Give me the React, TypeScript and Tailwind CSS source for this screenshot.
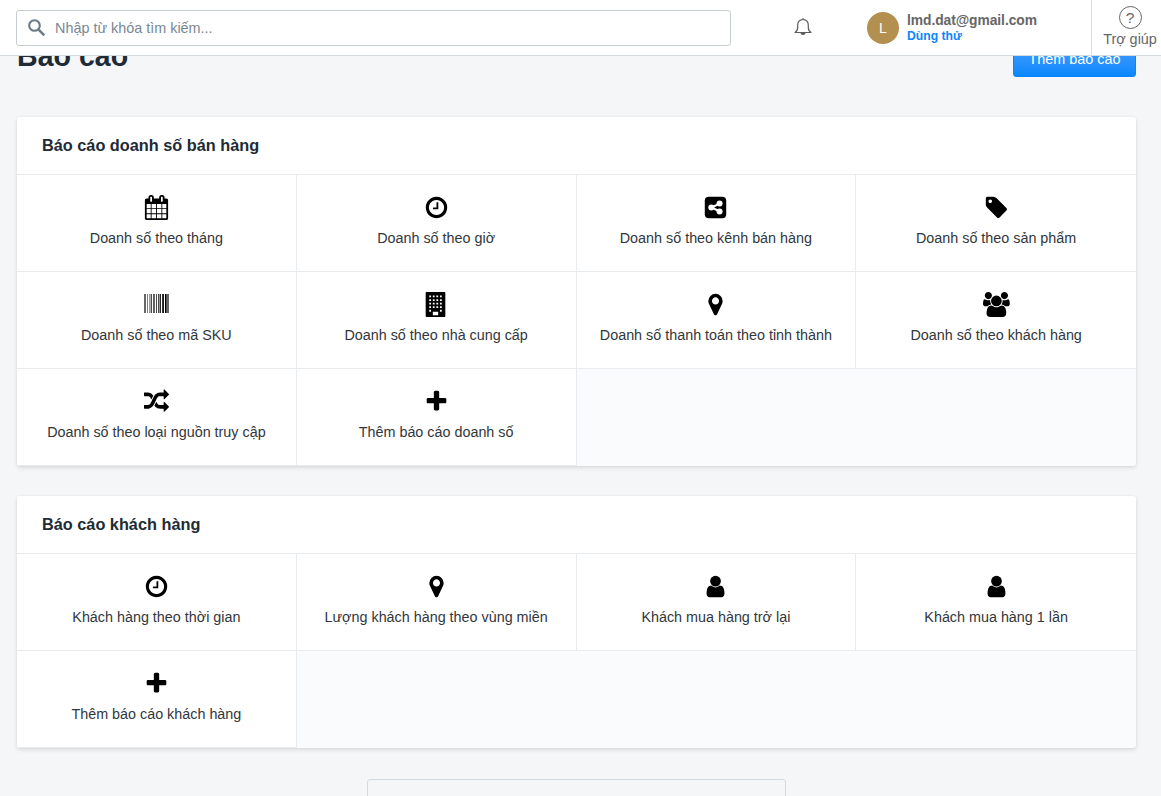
import React from "react";

type IconName =
  | "calendar" | "clock" | "share" | "tag" | "barcode" | "building"
  | "marker" | "users" | "random" | "plus" | "user";

const paths: Record<Exclude<IconName, "share" | "barcode">, string> = {
  calendar:
    "M192 1664h288v-288h-288v288zm352 0h320v-288h-320v288zm-352-352h288v-320h-288v320zm352 0h320v-320h-320v320zm-352-384h288v-288h-288v288zm736 736h320v-288h-320v288zm-384-736h320v-288h-320v288zm768 736h288v-288h-288v288zm-384-352h320v-320h-320v320zm-352-864v-288q0-13-9.5-22.5t-22.5-9.5h-64q-13 0-22.5 9.5t-9.5 22.5v288q0 13 9.5 22.5t22.5 9.5h64q13 0 22.5-9.5t9.5-22.5zm736 864h288v-320h-288v320zm-384-384h320v-288h-320v288zm384 0h288v-288h-288v288zm32-480v-288q0-13-9.5-22.5t-22.5-9.5h-64q-13 0-22.5 9.5t-9.5 22.5v288q0 13 9.5 22.5t22.5 9.5h64q13 0 22.5-9.5t9.5-22.5zm384-64v1280q0 52-38 90t-90 38h-1408q-52 0-90-38t-38-90v-1280q0-52 38-90t90-38h128v-96q0-66 47-113t113-47h64q66 0 113 47t47 113v96h384v-96q0-66 47-113t113-47h64q66 0 113 47t47 113v96h128q52 0 90 38t38 90z",
  clock:
    "M1024 544v448q0 14-9 23t-23 9h-320q-14 0-23-9t-9-23v-64q0-14 9-23t23-9h224v-352q0-14 9-23t23-9h64q14 0 23 9t9 23zm416 352q0-148-73-273t-198-198-273-73-273 73-198 198-73 273 73 273 198 198 273 73 273-73 198-198 73-273zm224 0q0 209-103 385.5t-279.5 279.5-385.5 103-385.5-103-279.5-279.5-103-385.5 103-385.5 279.5-279.5 385.5-103 385.5 103 279.5 279.5 103 385.5z",
  tag:
    "M576 448q0-53-37.5-90.5t-90.5-37.5-90.5 37.5-37.5 90.5 37.5 90.5 90.5 37.5 90.5-37.5 37.5-90.5zm1067 576q0 53-37 90l-491 492q-39 37-91 37-53 0-90-37l-715-716q-38-37-64.5-101t-26.5-117v-416q0-52 38-90t90-38h416q53 0 117 26.5t102 64.5l715 714q37 39 37 91z",
  building:
    "M256 0h1280q26 0 45 19t19 45v1664q0 26-19 45t-45 19h-1280q-26 0-45-19t-19-45v-1664q0-26 19-45t45-19zM448 256v128h128v-128zM704 256v128h128v-128zM960 256v128h128v-128zM1216 256v128h128v-128zM448 512v128h128v-128zM704 512v128h128v-128zM960 512v128h128v-128zM1216 512v128h128v-128zM448 768v128h128v-128zM704 768v128h128v-128zM960 768v128h128v-128zM1216 768v128h128v-128zM448 1024v128h128v-128zM704 1024v128h128v-128zM960 1024v128h128v-128zM1216 1024v128h128v-128zM448 1280v128h128v-128zM1216 1280v128h128v-128zM704 1408v256h384v-256z",
  marker:
    "M1152 640q0-106-75-181t-181-75-181 75-75 181 75 181 181 75 181-75 75-181zm256 0q0 109-33 179l-364 774q-16 33-47.5 52t-67.5 19-67.5-19-46.5-52l-365-774q-33-70-33-179 0-212 150-362t362-150 362 150 150 362z",
  users:
    "M593 896q-162 5-265 128h-134q-82 0-138-40.5t-56-118.5q0-353 124-353 6 0 43.5 21t97.5 42.5 119 21.5q67 0 133-23-5 37-5 66 0 139 81 256zm1071 637q0 120-73 189.5t-194 69.5h-874q-121 0-194-69.5t-73-189.5q0-53 3.5-103.5t14-109 26.5-108.5 43-97.5 62-81 85.5-53.5 111.5-20q10 0 43 21.5t73 48 107 48 135 21.5 135-21.5 107-48 73-48 43-21.5q61 0 111.5 20t85.5 53.5 62 81 43 97.5 26.5 108.5 14 109 3.5 103.5zm-1024-1277q0 106-75 181t-181 75-181-75-75-181 75-181 181-75 181 75 75 181zm704 384q0 159-112.5 271.5t-271.5 112.5-271.5-112.5-112.5-271.5 112.5-271.5 271.5-112.5 271.5 112.5 112.5 271.5zm576 225q0 78-56 118.5t-138 40.5h-134q-103-123-265-128 81-117 81-256 0-29-5-66 66 23 133 23 59 0 119-21.5t97.5-42.5 43.5-21q124 0 124 353zm-128-609q0 106-75 181t-181 75-181-75-75-181 75-181 181-75 181 75 75 181z",
  random:
    "M666 481q-60 92-137 273-22-45-37-72.5t-40.5-63.5-51-56.5-63-35-81.5-14.5h-224q-14 0-23-9t-9-23v-192q0-14 9-23t23-9h224q250 0 410 225zm1126 799q0 14-9 23l-320 320q-9 9-23 9-13 0-22.5-9.5t-9.5-22.5v-192q-32 0-85 .5t-81 1-73-1-71-5-64-10.5-63-18.5-58-28.5-59-40-55-53.5-56-69.5q59-93 136-273 22 45 37 72.5t40.5 63.5 51 56.5 63 35 81.5 14.5h256v-192q0-14 9-23t23-9q12 0 24 10l319 319q9 9 9 23zm0-896q0 14-9 23l-320 320q-9 9-23 9-13 0-22.5-9.5t-9.5-22.5v-192h-256q-48 0-87 15t-69 45-51 61.5-45 77.5q-32 62-78 171-29 66-49.5 111t-54 105-64 100-74 83-90 68.5-106.5 42-128 16.5h-224q-14 0-23-9t-9-23v-192q0-14 9-23t23-9h224q48 0 87-15t69-45 51-61.5 45-77.5q32-62 78-171 29-66 49.5-111t54-105 64-100 74-83 90-68.5 106.5-42 128-16.5h256v-192q0-14 9-23t23-9q12 0 24 10l319 319q9 9 9 23z",
  plus:
    "M1600 736v192q0 40-28 68t-68 28h-416v416q0 40-28 68t-68 28h-192q-40 0-68-28t-28-68v-416h-416q-40 0-68-28t-28-68v-192q0-40 28-68t68-28h416v-416q0-40 28-68t68-28h192q40 0 68 28t28 68v416h416q40 0 68 28t28 68z",
  user:
    "M1536 1399q0 109-62.5 187t-150.5 78h-854q-88 0-150.5-78t-62.5-187q0-85 8.5-160.5t31.5-152 58.5-131 94-89 134.5-34.5q131 128 313 128t313-128q76 0 134.5 34.5t94 89 58.5 131 31.5 152 8.5 160.5zm-256-887q0 159-112.5 271.5t-271.5 112.5-271.5-112.5-112.5-271.5 112.5-271.5 271.5-112.5 271.5 112.5 112.5 271.5z",
};

// [x, width] of each bar on a 25-unit grid
const bars = [
  [0, 0.6], [1, 0.6], [3, 0.5], [5, 0.4], [6, 0.3], [7, 0.7], [9, 0.65], [10, 0.6], [12, 0.7],
  [14, 0.7], [15, 0.4], [16, 0.85], [18, 0.8], [19, 0.9], [21, 1], [22, 0.65], [23, 0.6], [24, 0.6],
];

function Icon({ name }: { name: IconName }) {
  if (name === "barcode") {
    return (
      <svg viewBox="0 0 25 25" className="h-[25px] w-[25px]" fill="#000" aria-hidden="true">
        {bars.map(([x, w]) => (
          <rect key={x} x={x} y="2" width={w} height="19" />
        ))}
      </svg>
    );
  }
  if (name === "share") {
    return (
      <svg viewBox="0 0 1792 1792" className="h-[25px] w-[25px]" aria-hidden="true">
        <rect x="128" y="128" width="1536" height="1536" rx="288" fill="#000" />
        <path d="M1188 624L596 896l592 272" fill="none" stroke="#fff" strokeWidth="150" />
        <g fill="#fff">
          <circle cx="1188" cy="612" r="216" />
          <circle cx="596" cy="896" r="216" />
          <circle cx="1188" cy="1180" r="216" />
        </g>
      </svg>
    );
  }
  const wide = name === "users";
  return (
    <svg
      viewBox={wide ? "0 0 1920 1792" : "0 0 1792 1792"}
      className={
        wide ? "h-[25px] w-[26.8px]" : name === "building" ? "mr-[2px] h-[25px] w-[25px]" : "h-[25px] w-[25px]"
      }
      fill="#000"
      fillRule={name === "building" ? "evenodd" : "nonzero"}
      aria-hidden="true"
    >
      <path d={paths[name]} />
    </svg>
  );
}

type Report = { icon: IconName; label: string };

const salesReports: Report[] = [
  { icon: "calendar", label: "Doanh số theo tháng" },
  { icon: "clock", label: "Doanh số theo giờ" },
  { icon: "share", label: "Doanh số theo kênh bán hàng" },
  { icon: "tag", label: "Doanh số theo sản phẩm" },
  { icon: "barcode", label: "Doanh số theo mã SKU" },
  { icon: "building", label: "Doanh số theo nhà cung cấp" },
  { icon: "marker", label: "Doanh số thanh toán theo tỉnh thành" },
  { icon: "users", label: "Doanh số theo khách hàng" },
  { icon: "random", label: "Doanh số theo loại nguồn truy cập" },
  { icon: "plus", label: "Thêm báo cáo doanh số" },
];

const customerReports: Report[] = [
  { icon: "clock", label: "Khách hàng theo thời gian" },
  { icon: "marker", label: "Lượng khách hàng theo vùng miền" },
  { icon: "user", label: "Khách mua hàng trở lại" },
  { icon: "user", label: "Khách mua hàng 1 lần" },
  { icon: "plus", label: "Thêm báo cáo khách hàng" },
];

function ReportCard({ title, reports }: { title: string; reports: Report[] }) {
  return (
    <section className="overflow-hidden rounded-[3px] bg-[#fafbfc] shadow-[0_2px_4px_rgba(0,0,0,0.1),0_0_3px_rgba(0,0,0,0.06)]">
      <h2 className="flex h-[58px] items-center border-b border-[#e9ecef] bg-white px-[25px] text-[16.3px] font-bold text-[#212b35]">
        {title}
      </h2>
      <div className="grid grid-cols-4">
        {reports.map((report, i) => (
          <a
            key={report.label}
            className={
              "flex h-[97px] flex-col items-center border-b border-[#e9ecef] bg-white pt-5 " +
              (i % 4 === 3 ? "" : "border-r")
            }
          >
            <Icon name={report.icon} />
            <span className="mt-2 whitespace-nowrap text-[14.35px] leading-5 text-[#32373c]">{report.label}</span>
          </a>
        ))}
      </div>
    </section>
  );
}

export default function App() {
  return (
    <div className="flex h-[796px] w-[1161px] flex-col overflow-hidden bg-[#f4f6f8] font-['Liberation_Sans',Arial,sans-serif]">
      <header className="z-10 flex h-14 shrink-0 border-b border-[#d3d8dd] bg-white pl-4">
        <div className="mt-[10px] flex h-9 w-[715px] items-center rounded-[3px] border border-[#c4cdd5] pl-2">
          <svg viewBox="0 0 24 24" className="h-6 w-6 text-[#6b7a86]" fill="none" stroke="currentColor" aria-hidden="true">
            <circle cx="9.5" cy="9.5" r="5.3" strokeWidth="2.1" />
            <path d="M13.6 13.6l5.700 5.700" strokeWidth="2.500" />
          </svg>
          <span className="ml-[6px] pt-0.5 text-[14.4px] text-[#798793]">Nhập từ khóa tìm kiếm...</span>
        </div>
        <svg viewBox="0 0 18 20" className="ml-[63px] mt-[17px] h-5 w-[18px]" fill="none" stroke="#5c5c5c" strokeWidth="1.2" aria-hidden="true">
          <path d="M1 15.5h16q-2.700-1.700-2.700-5V8.200Q14.300 3.400 9.900 2.700a.9.900 0 0 0-1.800 0Q3.700 3.400 3.700 8.200v2.300q0 3.300-2.700 5z" strokeLinejoin="round" />
          <path d="M6.500 16h5a2.500 2 0 0 1-5 0z" fill="#5c5c5c" stroke="none" />
        </svg>
        <div className="ml-[55px] mt-3 flex h-8 w-8 items-center justify-center rounded-full bg-[#b49050] text-[14px] text-white">L</div>
        <div className="ml-2 mt-3 flex w-[184px] flex-col">
          <span className="text-[13.8px] font-bold leading-[17px] tracking-[-0.05px] text-[#666]">lmd.dat@gmail.com</span>
          <span className="text-[12.2px] font-bold leading-[14px] text-[#0d87fb]">Dùng thử</span>
        </div>
        <div className="flex flex-1 flex-col items-center border-l border-[#d9dde1] pl-[7px] pt-[6px]">
          <div className="flex h-[23px] w-[23px] shrink-0 items-center justify-center rounded-full border border-[#666] text-[15.5px] text-[#666]">?</div>
          <span className="whitespace-nowrap text-[14.4px] leading-5 text-[#666]">Trợ giúp</span>
        </div>
      </header>
      <main className="flex flex-col pl-[17px] pr-[25px]">
        <div className="-mt-[19px] flex h-10 items-end justify-between">
          <h1 className="mb-[5px] text-[28.6px] font-bold leading-8 text-[#212b35]">Báo cáo</h1>
          <button className="h-9 w-[123px] rounded-[3px] border border-[#0a84ff] bg-linear-to-b from-[#42a0ff] to-[#0787fb] pt-0.5 text-[14.4px] text-white">
            Thêm báo cáo
          </button>
        </div>
        <div className="mt-10 flex flex-col gap-[30px]">
          <ReportCard title="Báo cáo doanh số bán hàng" reports={salesReports} />
          <ReportCard title="Báo cáo khách hàng" reports={customerReports} />
        </div>
        <div className="mt-[31px] h-14 w-[419px] shrink-0 self-center rounded-[3px] border border-[#d3dbe2]" />
      </main>
    </div>
  );
}
